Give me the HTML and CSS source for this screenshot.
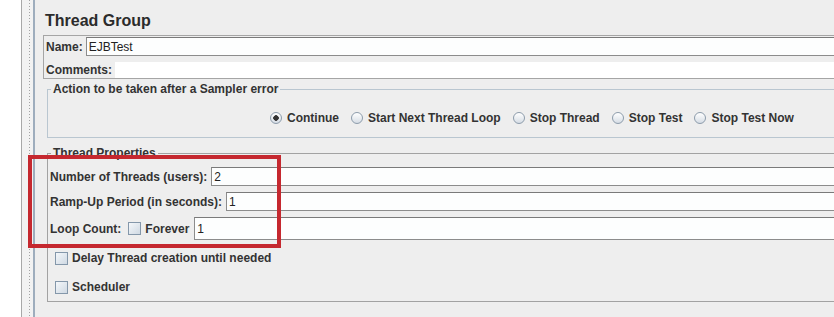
FILE: index.html
```html
<!DOCTYPE html>
<html lang="en">
<head>
<meta charset="UTF-8">
<title>Thread Group</title>
<link rel="stylesheet" href="styles.css">
</head>
<body>
    <div class="window">
        <div class="tree-edge"></div>
        <div class="splitter"></div>
        <div class="panel">
            <h1 class="title">Thread Group</h1>

            <div class="name-box">
                <div class="name-row">
                    <label for="name">Name:</label>
                    <input type="text" id="name" class="field" value="EJBTest">
                </div>
                <div class="comments-row">
                    <label for="comments">Comments:</label>
                    <textarea id="comments" class="comments-area"></textarea>
                </div>
            </div>

            <fieldset class="group action">
                <legend>Action to be taken after a Sampler error</legend>
                <div class="radios">
                    <label class="option"><input type="radio" class="radio" name="onError" checked>Continue</label>
                    <label class="option"><input type="radio" class="radio" name="onError">Start Next Thread Loop</label>
                    <label class="option"><input type="radio" class="radio" name="onError">Stop Thread</label>
                    <label class="option"><input type="radio" class="radio" name="onError">Stop Test</label>
                    <label class="option"><input type="radio" class="radio" name="onError">Stop Test Now</label>
                </div>
            </fieldset>

            <fieldset class="group props">
                <legend>Thread Properties</legend>
                <div class="prop-row">
                    <label for="threads">Number of Threads (users):</label>
                    <input type="text" id="threads" class="field" value="2">
                </div>
                <div class="prop-row">
                    <label for="rampup">Ramp-Up Period (in seconds):</label>
                    <input type="text" id="rampup" class="field" value="1">
                </div>
                <div class="prop-row loop">
                    <label for="loops">Loop Count:</label>
                    <label class="option forever"><input type="checkbox" class="check">Forever</label>
                    <input type="text" id="loops" class="field tall" value="1">
                </div>
                <label class="option check-row delay"><input type="checkbox" class="check">Delay Thread creation until needed</label>
                <label class="option check-row scheduler"><input type="checkbox" class="check">Scheduler</label>
            </fieldset>
        </div>

        <!-- annotation drawn over the screenshot -->
        <div class="highlight"></div>
    </div>
</body>
</html>
```

FILE: styles.css
```css
body {
    margin: 0;
    font-family: "Liberation Sans", Arial, sans-serif;
    font-size: 12px;
    color: #333;
    background-color: #fff;
    overflow: hidden;
}
.window {
    position: relative;
    display: flex;
    height: 317px;
}
.tree-edge {
    flex: none;
    width: 21px;
    border-right: 1px solid #a8a8a8;
    background-color: #fff;
}
.splitter {
    flex: none;
    width: 11px;
    background: linear-gradient(#a3a3a3 50%, transparent 50%) 7px 0 / 1px 3px repeat-y, #f2f2f2;
    border-right: 2px solid #9eadbd;
}
.panel {
    flex: 1;
    min-width: 0;
    padding-left: 8px;
    background-color: #eeeeee;
}
.title {
    margin: 11px 0 0 2px;
    font-size: 16px;
    line-height: 20px;
    font-weight: bold;
    color: #2b2b2b;
}
label {
    font-weight: bold;
    line-height: 16px;
    white-space: nowrap;
}
.field {
    box-sizing: border-box;
    flex: 1;
    min-width: 0;
    height: 19px;
    margin: 0;
    padding: 0 2px;
    border: 1px solid #8c8c8c;
    border-top-color: #7a7a7a;
    border-right: none;
    background-color: #fdfefe;
    font-family: inherit;
    font-size: 12px;
    color: #222;
    outline: none;
}
.field.tall {
    height: 23px;
}

/* name + comments */
.name-box {
    margin-top: 4px;
    border: 1px solid #a5a5a5;
    border-right: none;
}
.name-row {
    display: flex;
    align-items: center;
    gap: 3px;
    margin-top: 1px;
    padding-left: 2px;
}
.comments-row {
    display: flex;
    align-items: flex-end;
    gap: 3px;
    height: 22px;
    padding-left: 2px;
}
.comments-area {
    flex: 1;
    min-width: 0;
    height: 16px;
    margin: 0;
    padding: 0;
    border: none;
    resize: none;
    background-color: #fff;
}

/* titled groups */
.group {
    margin: 0 0 0 4px;
    border: 1px solid #a2a2a2;
    border-right: none;
    min-width: 0;
}
.group legend {
    margin-left: 1px;
    padding: 0 2px;
    font-weight: bold;
    line-height: 14px;
}
.action {
    margin-top: 3px;
    padding: 14px 0 11px 2px;
    border-color: #b9c6d0;
}
.props {
    margin-top: 8px;
    padding: 7px 0 6px 2px;
}

/* radios and checkboxes */
.radios {
    display: flex;
    padding-left: 220px;
}
.option {
    display: flex;
    align-items: center;
    gap: 5px;
    margin-right: 12px;
}
.radio {
    appearance: none;
    box-sizing: border-box;
    width: 12px;
    height: 12px;
    margin: 0;
    border: 1px solid #8d9cab;
    border-radius: 50%;
    background: linear-gradient(#ffffff, #d6dde5);
}
.radio:checked {
    background: radial-gradient(circle, #333 0 2.5px, transparent 3px), linear-gradient(#ffffff, #d6dde5);
}
.check {
    appearance: none;
    box-sizing: border-box;
    width: 13px;
    height: 13px;
    margin: 0;
    border: 1px solid #8497aa;
    background: linear-gradient(135deg, #f4f7fa, #cfd9e3);
}

/* thread properties */
.prop-row {
    display: flex;
    align-items: center;
    gap: 4px;
    margin-bottom: 6px;
}
.prop-row.loop {
    margin-bottom: 0;
}
.forever {
    margin: 0 0 0 3px;
    gap: 4px;
}
.loop .field {
    margin-left: 1px;
}
.check-row {
    gap: 4px;
    padding-left: 5px;
}
.delay {
    margin-top: 10px;
}
.scheduler {
    margin-top: 13px;
}

.highlight {
    position: absolute;
    left: 28px;
    top: 155px;
    width: 253px;
    height: 93px;
    box-sizing: border-box;
    border: 4px solid #c5282f;
}
```
